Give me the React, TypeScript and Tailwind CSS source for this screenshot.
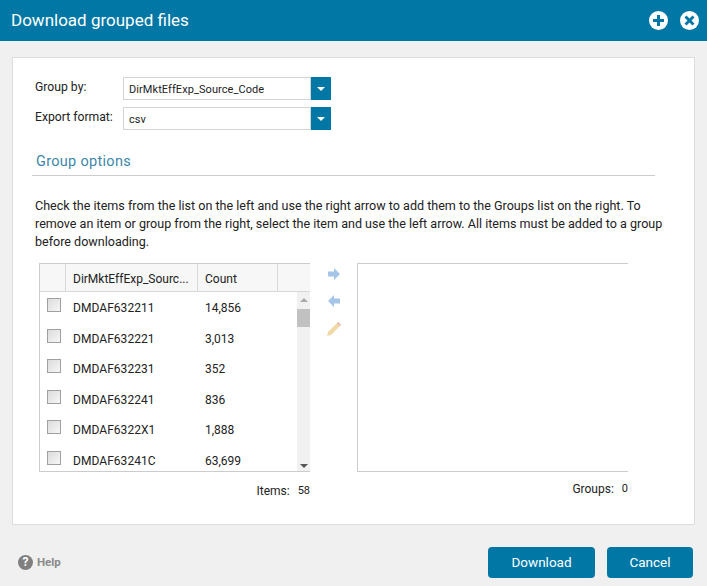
const rows = [
  ['DMDAF632211', '14,856'],
  ['DMDAF632221', '3,013'],
  ['DMDAF632231', '352'],
  ['DMDAF632241', '836'],
  ['DMDAF6322X1', '1,888'],
  ['DMDAF63241C', '63,699'],
];

function SelectBox({ value }: { value: string }) {
  return (
    <div className="flex h-[23px] w-[208px] items-stretch">
      <div className="flex-1 border border-[#d4d4d4] bg-white pl-[5px] pt-[3px] text-[11px] leading-[18px] tracking-[0.07px] text-[#222]">
        {value}
      </div>
      <div className="flex w-[20px] items-center justify-center bg-[#0077a5]">
        <div className="h-0 w-0 border-x-[4px] border-t-[4px] border-x-transparent border-t-white" />
      </div>
    </div>
  );
}

export default function App() {
  return (
    <div className="flex h-[586px] w-[707px] flex-col overflow-hidden bg-[#f0f0f0] font-['Roboto',sans-serif] text-[#222]">
      {/* title bar */}
      <div className="flex h-[41px] flex-none items-center bg-[#0077a5] pl-[11px] pr-[8px] text-white">
        <h1 className="flex-1 pb-[2px] text-[17px] font-normal leading-[40px]">Download grouped files</h1>
        <div className="mr-[12px] flex h-[19px] w-[19px] items-center justify-center rounded-full bg-white">
          <svg viewBox="0 0 19 19" className="h-[19px] w-[19px]">
            <path d="M8 4h3v4h4v3h-4v4H8v-4H4V8h4z" fill="#0077a5" />
          </svg>
        </div>
        <div className="flex h-[19px] w-[19px] items-center justify-center rounded-full bg-white">
          <svg viewBox="0 0 19 19" className="h-[19px] w-[19px]">
            <path d="M6.5 4.5 9.5 7.5l3-3 2 2-3 3 3 3-2 2-3-3-3 3-2-2 3-3-3-3z" fill="#0077a5" />
          </svg>
        </div>
      </div>

      {/* main panel */}
      <div className="mx-[12px] mt-[16px] h-[468px] flex-none border border-[#dddddd] bg-white pl-[21px] pt-[19px]">
        <div className="flex h-[23px] items-center">
          <label className="w-[89px] pb-[3px] pl-px text-[12.2px]">Group by:</label>
          <SelectBox value="DirMktEffExp_Source_Code" />
        </div>
        <div className="mt-[7px] flex h-[23px] items-center">
          <label className="w-[89px] pb-[3px] pl-px text-[12.2px]">Export format:</label>
          <SelectBox value="csv" />
        </div>

        <div className="mt-[22px] mr-[39px] -ml-[2px] border-b border-[#cccccc] pb-[3px] pl-[4px] text-[14.5px] leading-[20px] tracking-[0.3px] text-[#3d87ab]">
          Group options
        </div>

        <p className="mt-[21px] mr-[30px] pl-px text-[12.55px] leading-[18px]">
          Check the items from the list on the left and use the right arrow to add them to the Groups list on the right. To remove an item or group from the right, select the item and use the left arrow. All items must be added to a group before downloading.
        </p>

        <div className="mt-[12px] flex items-start pl-[5px]">
          {/* items list */}
          <div className="w-[271px]">
            <div className="h-[209px] overflow-hidden border-y border-l border-[#cccccc]">
              <div className="flex h-[28px] border-b border-[#d8d8d8] bg-[#f7f7f7] text-[12px] leading-[31px]">
                <div className="w-[26px] border-r border-[#d8d8d8]" />
                <div className="w-[132px] border-r border-[#d8d8d8] pl-[7px]">DirMktEffExp_Sourc...</div>
                <div className="w-[80px] border-r border-[#d8d8d8] pl-[7px]">Count</div>
                <div className="flex-1" />
              </div>
              <div className="flex h-[180px]">
                <div className="flex-1 overflow-hidden">
                  {rows.map(([code, count]) => (
                    <div key={code} className="flex h-[30.5px] items-start text-[12px]">
                      <div className="w-[26px] pl-[7px] pt-[6px]">
                        <div className="h-[14px] w-[14px] border border-[#a0a0a0] bg-gradient-to-br from-[#dcdcdc] to-[#f6f6f6]" />
                      </div>
                      <div className="w-[132px] pl-[7px] pt-[7px] leading-[18px] tracking-[0.05px]">{code}</div>
                      <div className="pl-[7px] pt-[7px] leading-[18px]">{count}</div>
                    </div>
                  ))}
                </div>
                <div className="flex w-[13px] flex-col items-center bg-[#f1f1f1]">
                  <div className="mt-[6px] h-0 w-0 border-x-[4px] border-b-[4px] border-x-transparent border-b-[#aaaaaa]" />
                  <div className="mt-[7px] h-[18px] w-[13px] bg-[#c1c1c1]" />
                  <div className="mb-[4px] mt-auto h-0 w-0 border-x-[4px] border-t-[4px] border-x-transparent border-t-[#555555]" />
                </div>
              </div>
            </div>
            <div className="mt-[10px] flex justify-end text-[12px] leading-[18px]">
              <span>Items:</span>
              <span className="ml-[8px] text-[11px]">58</span>
            </div>
          </div>

          {/* move buttons */}
          <div className="flex w-[47px] flex-col items-center pt-[5px]">
            <svg viewBox="0 0 12 12" className="h-[12px] w-[12px]">
              <path d="M0 3.5h6V0l6 6-6 6V8.5H0z" fill="#a5c6e8" />
            </svg>
            <svg viewBox="0 0 12 12" className="mt-[15px] h-[12px] w-[12px]">
              <path d="M12 3.5H6V0L0 6l6 6V8.5h6z" fill="#a5c6e8" />
            </svg>
            <svg viewBox="0 0 14 14" className="mt-[15px] h-[14px] w-[14px]">
              <path d="M0 14l1-4L10 1l3 3-9 9z" fill="#f0d9a4" />
              <path d="M10 1l1-1 3 3-1 1z" fill="#e8a8a0" />
            </svg>
          </div>

          {/* groups list */}
          <div className="w-[271px]">
            <div className="h-[209px] border-y border-l border-[#cccccc]" />
            <div className="mt-[8px] flex justify-end text-[12px] leading-[18px]">
              <span>Groups:</span>
              <span className="ml-[8px] text-[11px]">0</span>
            </div>
          </div>
        </div>
      </div>

      {/* footer */}
      <div className="mt-[22px] flex items-center pl-[18px] pr-[14px]">
        <div className="flex flex-1 items-center gap-[4px] pb-[1px] text-[11.5px] font-bold text-[#8a8a8a]">
          <div className="flex h-[15px] w-[15px] items-center justify-center rounded-full bg-[#7f7f7f] text-[12px] leading-none text-white">?</div>
          <span className="pt-[2px]">Help</span>
        </div>
        <button className="h-[31px] w-[107px] rounded-[4px] bg-[#0077a5] text-[13.5px] text-white">Download</button>
        <button className="ml-[12px] h-[31px] w-[86px] rounded-[4px] bg-[#0077a5] text-[13.5px] text-white">Cancel</button>
      </div>
    </div>
  );
}
